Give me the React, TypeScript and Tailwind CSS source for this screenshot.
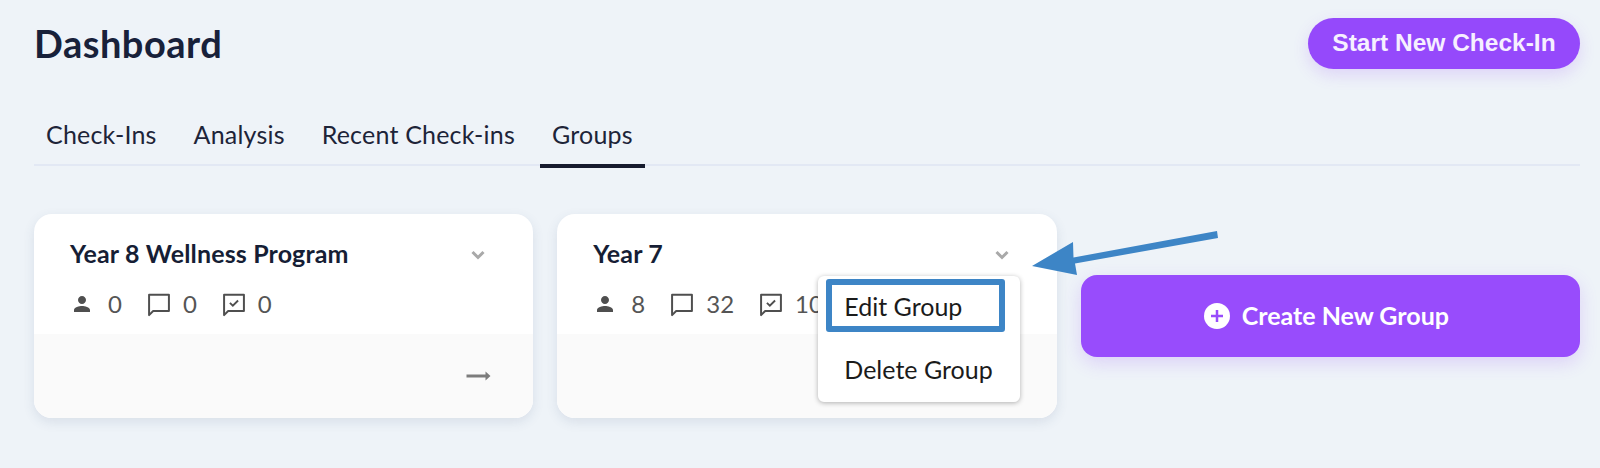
const TABS = ["Check-Ins", "Analysis", "Recent Check-ins", "Groups"];

function PersonIcon() {
  return (
    <svg viewBox="0 0 24 24" className="h-[24px] w-[24px] shrink-0" fill="#4f4f4f">
      <path d="M12 12c2.200 0 4-1.800 4-4s-1.800-4-4-4-4 1.800-4 4 1.800 4 4 4zm0 2c-2.700 0-8 1.300-8 4v2h16v-2c0-2.700-5.300-4-8-4z" />
    </svg>
  );
}

function CommentIcon({ checked }: { checked?: boolean }) {
  return (
    <svg viewBox="0 0 24 24" className="h-[28px] w-[28px] shrink-0" fill="none" stroke="#4f4f4f" strokeWidth="1.700">
      <path d="M3.500 4h17v14H7l-3.500 3.500z" strokeLinejoin="round" />
      {checked && <path d="M8.500 11l2.500 2.500 4.500-4.500" strokeWidth="1.600" />}
    </svg>
  );
}

function Chevron() {
  return (
    <svg viewBox="0 0 14 10" className="mt-[3px] h-[10px] w-[14px]" fill="none" stroke="#a9a9a9" strokeWidth="3">
      <path d="M1.500 2L7 7.500 12.500 2" />
    </svg>
  );
}

function GroupCard({ title, stats, arrow, menu }: { title: string; stats: number[]; arrow?: boolean; menu?: boolean }) {
  const numberClass = "text-[24px] leading-none text-[#555555]";
  return (
    <div className="relative flex h-[204px] flex-col rounded-[18px] bg-white shadow-[0_4px_12px_rgba(60,80,120,0.12)]">
      <div className="h-[120px] px-[36px] pt-[23px]">
        <div className="flex items-center justify-between pr-[12px]">
          <h3 className="text-[25px] leading-[32px] font-bold tracking-[0.15px] text-[#161e35]">{title}</h3>
          <Chevron />
        </div>
        <div className="mt-[21px] flex items-center gap-[23px]">
          <div className="flex items-center gap-[14px]">
            <PersonIcon />
            <span className={numberClass}>{stats[0]}</span>
          </div>
          <div className="flex items-center gap-[10px]">
            <CommentIcon />
            <span className={numberClass}>{stats[1]}</span>
          </div>
          <div className="flex items-center gap-[10px]">
            <CommentIcon checked />
            <span className={numberClass}>{stats[2]}</span>
          </div>
        </div>
      </div>
      <div className="flex flex-1 items-center justify-end rounded-b-[18px] bg-[#fafafa] pr-[42px]">
        {arrow && (
          <svg viewBox="0 0 24 12" className="h-[12px] w-[25px]" fill="#7c7c7c">
            <path d="M0 4.500h19V1.500l5 4.500-5 4.500V7.500H0z" />
          </svg>
        )}
      </div>
      {menu && (
        <div className="absolute top-[62px] left-[261px] flex h-[126px] w-[202px] flex-col rounded-[6px] bg-white px-[8px] pt-[3px] text-[25px] text-[#1b1b1b] shadow-[0_1px_5px_rgba(0,0,0,0.3)]">
          <div className="flex h-[53px] w-[179px] items-center rounded-[3px] border-[6px] border-[#3d85c6] pt-[3px] pl-[12px]">Edit Group</div>
          <div className="flex h-[63px] items-center pt-[12px] pl-[18px]">Delete Group</div>
        </div>
      )}
    </div>
  );
}

export default function App() {
  return (
    <div className="relative h-[468px] w-[1600px] overflow-hidden bg-[#eef3f8] px-[34px] pt-[18px] font-['Lato','Noto_Sans',sans-serif]">
      <div className="flex items-center justify-between">
        <h1 className="text-[38px] leading-[51px] font-bold tracking-[0.5px] text-[#18213a]">Dashboard</h1>
        <button className="mr-[-14px] h-[51px] w-[272px] rounded-full bg-[#9549fb] font-['Liberation_Sans',sans-serif] text-[24.500px] font-bold text-[#f6f0ff] shadow-[0_6px_16px_rgba(149,73,251,0.18)]">
          Start New Check-In
        </button>
      </div>

      <nav className="mt-[41px] mr-[-14px] flex h-[56px] gap-[13px] border-b-2 border-[#e2e8f4]">
        {TABS.map((tab) => (
          <div
            key={tab}
            className={`mb-[-2px] flex h-[58px] items-center border-b-4 px-[12px] pb-[4px] text-[25px] tracking-[0.2px] text-[#1d2438] ${tab === "Groups" ? "border-[#161b2e]" : "border-transparent"}`}
          >
            {tab}
          </div>
        ))}
      </nav>

      <div className="mt-[48px] mr-[-14px] grid grid-cols-3 items-center gap-[24px]">
        <GroupCard title="Year 8 Wellness Program" stats={[0, 0, 0]} arrow />
        <GroupCard title="Year 7" stats={[8, 32, 10]} menu />
        <button className="flex h-[82px] items-center justify-center gap-[12px] rounded-[16px] bg-[#984cfc] pr-[8px] text-[25px] font-bold text-white shadow-[0_6px_18px_rgba(149,73,251,0.2)]">
          <svg viewBox="0 0 26 26" className="h-[26px] w-[26px]">
            <circle cx="13" cy="13" r="13" fill="#ffffff" />
            <path d="M13 7v12M7 13h12" stroke="#984cfc" strokeWidth="2.500" />
          </svg>
          Create New Group
        </button>
      </div>

      {/* annotation arrow */}
      <svg viewBox="0 0 1600 468" className="pointer-events-none absolute top-0 left-0 h-[468px] w-[1600px]">
        <path d="M1032 266L1073 242 1073.500 257.500 1217 231 1218 238 1075 263.500 1077 275z" fill="#3d85c6" />
      </svg>
    </div>
  );
}
